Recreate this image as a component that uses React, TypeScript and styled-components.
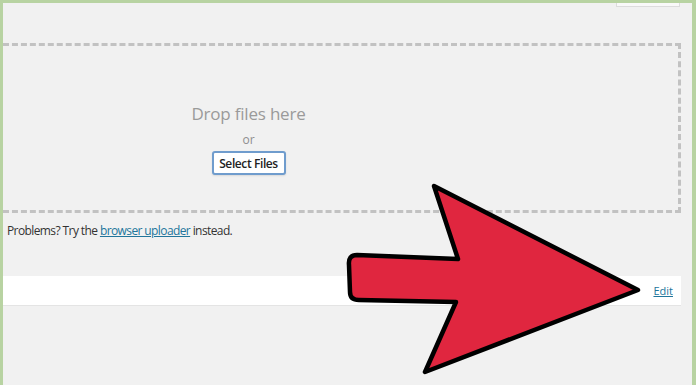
import styled, { createGlobalStyle } from "styled-components";

const GlobalStyle = createGlobalStyle`
  html, body {
    margin: 0;
    padding: 0;
    background: #b8d3a2;
    overflow: hidden;
  }
  body {
    font-family: "Open Sans", "Liberation Sans", sans-serif;
  }
`;

const Frame = styled.div`
  box-sizing: border-box;
  width: 696px;
  height: 385px;
  padding: 3px 4px 0 3px;
`;

const Panel = styled.div`
  box-sizing: border-box;
  position: relative;
  height: 100%;
  padding-right: 11px;
  background: #f1f1f1;
  display: flex;
  flex-direction: column;
  overflow: hidden;
`;

const TopTab = styled.div`
  align-self: flex-end;
  width: 62px;
  height: 3px;
  margin-right: 1px;
  background: #f9f9f9;
  border: 1px solid #dcdcdc;
  border-top: none;
`;

/* left edge of the drop zone lies outside the crop, so it has no left border */
const DropZone = styled.div`
  box-sizing: border-box;
  height: 170px;
  margin-top: 36px;
  padding: 56px 184px 0 0;
  border: 3px dashed #c2c2c2;
  border-left: none;
  display: flex;
  flex-direction: column;
  align-items: center;
`;

const DropTitle = styled.div`
  font-size: 17px;
  line-height: 24px;
  letter-spacing: -0.2px;
  color: #9a9a9a;
`;

const Or = styled.div`
  margin-top: 5px;
  font-size: 12px;
  line-height: 18px;
  color: #8e8e8e;
`;

const SelectButton = styled.button`
  box-sizing: border-box;
  margin-top: 2px;
  width: 74px;
  height: 24px;
  padding: 0;
  background: #fff;
  border: 2px solid #6f9ccd;
  border-radius: 3px;
  font-family: inherit;
  font-size: 12px;
  font-weight: 600;
  letter-spacing: -0.4px;
  color: #222;
  box-shadow: 0 1px 2px rgba(0, 0, 0, 0.1);
`;

const Help = styled.p`
  margin: 9px 0 0 4px;
  font-size: 12px;
  line-height: 18px;
  letter-spacing: -0.6px;
  color: #333;
`;

const HelpLink = styled.a`
  color: #21759b;
  text-decoration: underline;
`;

const ItemBar = styled.div`
  box-sizing: border-box;
  margin-top: 36px;
  height: 30px;
  background: #fff;
  border-bottom: 1px solid #e4e4e4;
  display: flex;
  align-items: center;
  justify-content: flex-end;
  padding-right: 8px;
`;

const EditLink = styled.a`
  font-size: 11px;
  color: #21759b;
  text-decoration: underline;
`;

const Arrow = styled.svg`
  position: absolute;
  left: 0;
  top: 0;
  width: 689px;
  height: 382px;
  pointer-events: none;
`;

export default function App() {
  return (
    <>
      <GlobalStyle />
      <Frame>
        <Panel>
          <TopTab />
          <DropZone>
            <DropTitle>Drop files here</DropTitle>
            <Or>or</Or>
            <SelectButton>Select Files</SelectButton>
          </DropZone>
          <Help>
            Problems? Try the <HelpLink href="#">browser uploader</HelpLink> instead.
          </Help>
          <ItemBar>
            <EditLink href="#">Edit</EditLink>
          </ItemBar>
          <Arrow viewBox="0 0 689 382">
            <path
              d="M431 183 L455 256 L354 252 Q345 252 346 262 L347 289 Q347 297 356 297 L453 299 L422 369 L635 287 Z"
              fill="#e0263f"
              stroke="#000"
              strokeWidth="4.5"
              strokeLinejoin="round"
            />
          </Arrow>
        </Panel>
      </Frame>
    </>
  );
}
